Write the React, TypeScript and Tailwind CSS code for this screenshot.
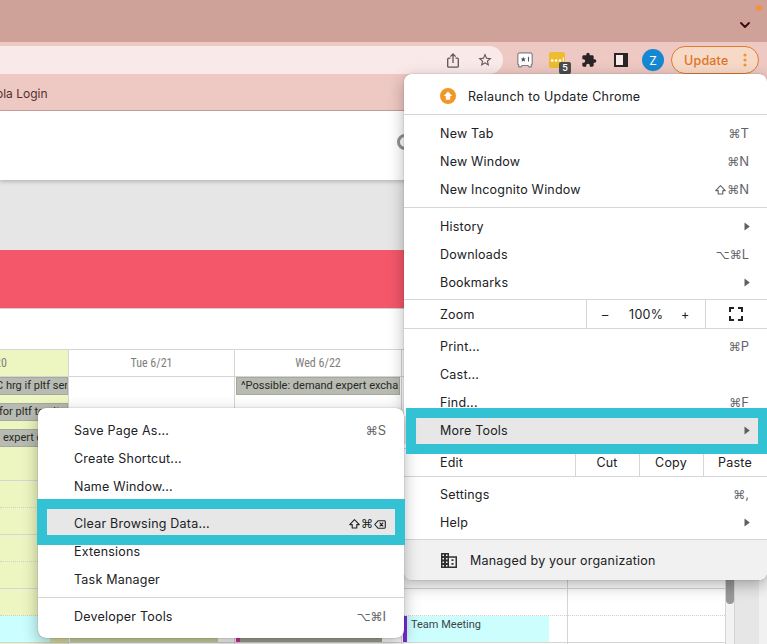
import React from 'react';
import { clsx } from 'clsx';
import { ChevronDown } from 'lucide-react';
import { MdExtension, MdFullscreen, MdOutlineStarBorder } from 'react-icons/md';

const COLORS = {
  today: 'bg-[#edf6c1]',
};

interface MenuRowProps {
  label: string;
  shortcut?: string;
  submenu?: boolean;
  dark?: boolean;
}

const MenuRow: React.FC<MenuRowProps> = ({ label, shortcut, submenu, dark }) => (
  <div className="flex h-7 shrink-0 items-center justify-between pl-9 pr-[18px]">
    <span className="pt-[2px]">{label}</span>
    {shortcut && <Shortcut keys={shortcut} dark={dark} />}
    {submenu && (
      <svg className="-mr-px h-[9px] w-[6px]" viewBox="0 0 6 9" fill="#5f6063">
        <path d="M.5 .5 5.8 4.5 .5 8.5Z" />
      </svg>
    )}
  </div>
);

const Key: React.FC<{ name: string }> = ({ name }) => {
  if (name === '⇧') {
    return (
      <svg className="mr-px h-[10px] w-[11px]" viewBox="0 0 11 10" fill="none" stroke="currentColor" strokeWidth="1.1" strokeLinejoin="round">
        <path d="M5.500 .7 10.300 5.600H7.800V9H3.200V5.600H.7Z" />
      </svg>
    );
  }
  if (name === '⌫') {
    return (
      <svg className="ml-px h-[9px] w-3" viewBox="0 0 12 9" fill="none" stroke="currentColor" strokeWidth="1.1" strokeLinejoin="round">
        <path d="M4 .8H10.400Q11.300 .8 11.300 1.700V7.300Q11.300 8.200 10.400 8.200H4L.7 4.500ZM5.600 2.700 9.200 6.300M9.200 2.700 5.600 6.300" />
      </svg>
    );
  }
  if (/[A-Z,]/.test(name)) {
    return <span className="text-[13px]">{name}</span>;
  }
  return <span className="font-['DejaVu_Sans'] text-[12px]">{name}</span>;
};

const Shortcut: React.FC<{ keys: string; dark?: boolean }> = ({ keys, dark }) => (
  <span className={clsx('flex items-center pt-[2px] tracking-normal', dark ? 'text-[#202124]' : 'text-[#5f6368]')}>
    {Array.from(keys).map((key, i) => (
      <Key key={i} name={key} />
    ))}
  </span>
);

const Separator = () => <div className="h-px shrink-0 bg-[#d6d6d6]" />;

const ShareIcon = () => (
  <svg className="h-[15px] w-3" viewBox="0 0 12 15" fill="none" stroke="#5f5658" strokeWidth="1.3">
    <path d="M3.5 5.2H1.7a1 1 0 0 0-1 1v7a1 1 0 0 0 1 1h8.600a1 1 0 0 0 1-1v-7a1 1 0 0 0-1-1H8.500" />
    <path d="M6 10V1.200M3.400 3.600 6 1l2.600 2.600" />
  </svg>
);

const TicketIcon = () => (
  <svg className="h-4 w-4" viewBox="0 0 16 16">
    <path
      d="M3 .8h10A2 2 0 0 1 15.200 3v9l-.9 1v1.800h-2.300l-1.200-1.300H5.200L4 14.800H1.700V13L.8 12V3A2 2 0 0 1 3 .8Z"
      fill="#fff"
      stroke="#7f8386"
      strokeWidth="1.2"
      strokeLinejoin="round"
    />
    <path
      d="M6.300 4.700 7 6.500 8.900 6.600 7.500 7.800 8 9.700 6.300 8.700 4.600 9.700 5.100 7.800 3.700 6.600 5.600 6.500Z"
      fill="#4c5154"
    />
    <path d="M11.500 4.800v4.800" stroke="#555a5d" strokeWidth="1.100" />
  </svg>
);

const NotesIcon = () => (
  <div className="relative h-4 w-4 rounded-[2px] bg-[#edbd2f]">
    <svg className="h-4 w-4" viewBox="0 0 16 16" fill="#fff">
      <circle cx="3.200" cy="8.500" r="1.300" />
      <circle cx="7.100" cy="8.500" r="1.300" />
      <circle cx="11" cy="8.500" r="1.300" />
      <rect x="13.800" y="5.500" width="1" height="4" />
    </svg>
    <span className="absolute left-[10px] top-[10px] flex h-3 w-3 items-center justify-center rounded-[2px] bg-[#4b4b4b] text-[9px] font-semibold text-white">
      5
    </span>
  </div>
);

const BrowserHeader = () => (
  <header className="shrink-0">
    <div className="relative flex h-[42px] justify-end bg-[#cea199] pr-[14px] pt-[17px]">
      <ChevronDown className="h-4 w-4 text-[#3c0b10]" strokeWidth={2.800} />
      <span className="absolute right-[5px] top-[5px] h-[6px] w-[6px] rounded-full bg-[#f39237]" />
    </div>
    <div className="flex h-8 items-center bg-[#eec8c2] pt-1">
      <div className="flex h-7 w-[503px] items-center justify-end rounded-r-full bg-[#f9e9e8] pr-[10px]">
        <ShareIcon />
        <MdOutlineStarBorder className="ml-[18px] h-4 w-4 text-[#5f5658]" />
      </div>
      <div className="ml-[14px] flex items-center">
        <TicketIcon />
        <div className="ml-4">
          <NotesIcon />
        </div>
        <MdExtension className="ml-4 h-4 w-4 text-[#2a2425]" />
        <div className="ml-[17px] h-[14px] w-[14px] border-2 border-r-[5px] border-[#2a2425] bg-[#faebe9]" />
        <div className="ml-[14px] flex h-[22px] w-[22px] items-center justify-center rounded-full bg-[#1688d2] pt-px text-[12px] text-white">
          Z
        </div>
        <div className="ml-[7px] flex h-7 w-[88px] items-center rounded-full border border-[#e17a2c] bg-[#f7d9c7] pl-3 text-[#e0731f]">
          <span className="pt-[2px] text-[12.5px] font-medium tracking-[0.2px]">Update</span>
          <svg className="ml-[15px] h-4 w-1" viewBox="0 0 4 16" fill="#ef962f">
            <circle cx="2" cy="3" r="1.600" />
            <circle cx="2" cy="8" r="1.600" />
            <circle cx="2" cy="13" r="1.600" />
          </svg>
        </div>
      </div>
    </div>
    <div className="flex h-[37px] items-center border-b border-[#c8a09b] bg-[#eec8c2] pt-[3px] text-[12px] text-[#53302e]">
      <span className="-ml-[4px]">ola Login</span>
    </div>
  </header>
);

const AllDayEvent: React.FC<{ children: React.ReactNode; className?: string }> = ({ children, className }) => (
  <div
    className={clsx(
      'h-[18px] overflow-hidden whitespace-nowrap border border-[#a5a89f] bg-[#b8bbb1] text-[11px] leading-[15px] text-[#282828]',
      className
    )}
  >
    {children}
  </div>
);

interface DayColumnProps {
  title?: React.ReactNode;
  width: string;
  today?: boolean;
  allDay?: React.ReactNode;
  meeting?: React.ReactNode;
}

const DayColumn: React.FC<DayColumnProps> = ({ title, width, today, allDay, meeting }) => (
  <div className={clsx('flex shrink-0 flex-col overflow-hidden border-r border-[#d5d5d5]', width, today ? COLORS.today : 'bg-white')}>
    <div
      className={clsx(
        'flex h-7 shrink-0 items-center border-y border-[#d5d5d5] text-[12px] text-[#7e7e7e]',
        today ? 'justify-start' : 'justify-center'
      )}
    >
      <span className={clsx('whitespace-nowrap [font-stretch:75%]', today && '-ml-[5px]')}>{title}</span>
    </div>
    <div className="flex h-[104px] shrink-0 flex-col gap-2 border-b border-[#d5d5d5]">{allDay}</div>
    {[0, 1, 2].map((hour) => (
      <React.Fragment key={hour}>
        <div className="h-[27px] shrink-0 border-b border-dotted border-[#cfcfcf]" />
        <div className="h-[27px] shrink-0 border-b border-[#d5d5d5]">{hour === 2 && meeting}</div>
      </React.Fragment>
    ))}
  </div>
);

const Calendar = () => (
  <div className="flex h-[295px] overflow-hidden font-[Roboto,sans-serif]">
    <DayColumn
      title="20"
      width="w-[69px]"
      today
      allDay={
        <>
          <AllDayEvent className="border-l-0"><span className="-ml-[4px]">C hrg if pltf ser</span></AllDayEvent>
          <AllDayEvent className="border-l-0"><span className="-ml-px">for pltf to plt</span></AllDayEvent>
          <AllDayEvent className="border-l-0"><span className="ml-[3px]">expert d</span></AllDayEvent>
        </>
      }
      meeting={
        <div className="flex h-[26px]">
          <div className="w-[50px] bg-[#cbfefe]" />
          <div className="flex-1 bg-[#dfe0a4]" />
        </div>
      }
    />
    <DayColumn title="Tue 6/21" width="w-[166px]" meeting={<div className="ml-px h-[26px] w-[148px] bg-[#cdd69c]" />} />
    <DayColumn
      title="Wed 6/22"
      width="w-[167px]"
      allDay={
        <AllDayEvent className="ml-px mr-px pl-1">
          <span>^Possible: demand expert excha</span>
        </AllDayEvent>
      }
      meeting={<div className="ml-px h-[26px] w-[146px] border-l-4 border-[#d42a97] bg-[#a3a395]" />}
    />
    <DayColumn
      width="w-[166px]"
      meeting={
        <div className="ml-px h-[26px] w-[146px] border-l-4 border-[#7a2bd6] bg-[#cdfefe] pl-1 pt-[2px] text-[11px] leading-[13px] text-[#3c4545]">
          Team Meeting
        </div>
      }
    />
    <DayColumn width="w-[158px]" />
    <div className="w-2 shrink-0 bg-[#f2f2f2]">
      <div className="h-[255px] w-2 rounded-full bg-[#999]" />
    </div>
    <div className="w-[25px] shrink-0 border-l border-[#d5d5d5] bg-[#e6e6e6]" />
    <div className="flex-1 bg-[#f1f1f1]" />
  </div>
);

const MainMenu = () => (
  <div className="absolute left-[404px] top-[74px] flex h-[506px] w-[363px] flex-col overflow-hidden rounded-[8px] bg-white text-[12.5px] tracking-[0.21px] text-[#202124]">
    <div className="flex h-10 shrink-0 items-center pl-9 pt-1">
      <svg className="mr-3 h-4 w-4" viewBox="0 0 16 16">
        <circle cx="8" cy="8" r="8" fill="#f29627" />
        <path d="M8 3.600 12.200 8.100H10.200V11.800H5.800V8.100H3.800Z" fill="#fff" />
      </svg>
      <span className="pt-[2px] tracking-[0.25px]">Relaunch to Update Chrome</span>
    </div>
    <Separator />
    <div className="py-1">
      <MenuRow label="New Tab" shortcut="⌘T" />
      <MenuRow label="New Window" shortcut="⌘N" />
      <MenuRow label="New Incognito Window" shortcut="⇧⌘N" />
    </div>
    <Separator />
    <div className="pb-[3px] pt-1">
      <MenuRow label="History" submenu />
      <MenuRow label="Downloads" shortcut="⌥⌘L" />
      <MenuRow label="Bookmarks" submenu />
    </div>
    <Separator />
    <div className="flex h-7 shrink-0 items-center pl-9">
      <span className="w-[146px] pt-[2px]">Zoom</span>
      <div className="flex h-full w-[119px] items-center border-l border-[#d6d6d6] pl-[15px] pt-[2px]">
        <span className="w-[27px]">–</span>
        <span className="w-[52px] tracking-[0.3px]">100%</span>
        <span>+</span>
      </div>
      <div className="flex h-full flex-1 items-center justify-center border-l border-[#d6d6d6] pr-px">
        <MdFullscreen className="h-6 w-6" />
      </div>
    </div>
    <Separator />
    <div className="pb-1 pt-[3px]">
      <MenuRow label="Print..." shortcut="⌘P" />
      <MenuRow label="Cast..." />
      <MenuRow label="Find..." shortcut="⌘F" />
      <div className="bg-[#e7e7e7]">
        <MenuRow label="More Tools" submenu />
      </div>
    </div>
    <Separator />
    <div className="flex h-[27px] shrink-0 items-center pl-9">
      <span className="w-[135px] pt-px">Edit</span>
      <div className="flex h-full w-16 items-center justify-center border-l border-[#d6d6d6] pr-px pt-px">Cut</div>
      <div className="flex h-full w-16 items-center justify-center border-l border-[#d6d6d6] pr-px pt-px">Copy</div>
      <div className="flex h-full w-16 items-center justify-center border-l border-[#d6d6d6] pr-px pt-px">Paste</div>
    </div>
    <Separator />
    <div className="py-[3px]">
      <MenuRow label="Settings" shortcut="⌘," />
      <MenuRow label="Help" submenu />
    </div>
    <Separator />
    <div className="flex flex-1 items-center bg-[#f1f1f1] pl-[37px]">
      <svg className="mr-[13px] h-[15px] w-4" viewBox="0 0 16 15" fill="#303134">
        <path
          fillRule="evenodd"
          d="M0 0H8V3.300H16V15H0ZM1.500 1.500V3H3V1.500ZM5 1.500V3H6.500V1.500ZM1.500 5V6.500H3V5ZM5 5V6.500H6.500V5ZM1.500 8.500V10H3V8.500ZM5 8.500V10H6.500V8.500ZM1.500 12V13.500H3V12ZM5 12V13.500H6.500V12ZM8 4.800V13.500H14.500V4.800ZM10.500 6.300H12.500V8H10.500ZM10.500 10H12.500V11.700H10.500Z"
        />
      </svg>
      <span className="pt-[2px]">Managed by your organization</span>
    </div>
  </div>
);

const MoreToolsMenu = () => (
  <div className="absolute left-[38px] top-[408px] flex h-[230px] w-[366px] flex-col rounded-[8px] bg-white pt-2 text-[12.5px] tracking-[0.21px] text-[#202124] shadow-[0_0_1px_rgba(0,0,0,0.55),0_5px_16px_rgba(0,0,0,0.3)]">
    <MenuRow label="Save Page As..." shortcut="⌘S" />
    <MenuRow label="Create Shortcut..." />
    <MenuRow label="Name Window..." />
    <div className="py-1">
      <Separator />
    </div>
    <div className="bg-[#e7e7e7]">
      <MenuRow label="Clear Browsing Data..." shortcut="⇧⌘⌫" dark />
    </div>
    <MenuRow label="Extensions" />
    <MenuRow label="Task Manager" />
    <div className="py-1">
      <Separator />
    </div>
    <MenuRow label="Developer Tools" shortcut="⌥⌘I" />
  </div>
);

const App = () => {
  return (
    <div className="relative flex h-[644px] w-[767px] flex-col overflow-hidden bg-white font-[Inter,sans-serif]">
      <BrowserHeader />
      <div className="flex h-[139px] shrink-0 flex-col bg-[#e6e6e6]">
        <div className="flex h-[69px] items-center bg-white pl-[397px] shadow-[0_2px_4px_rgba(0,0,0,0.2)]">
          <div className="mb-[7px] h-4 w-4 rounded-full border-[3px] border-[#929292]" />
        </div>
      </div>
      <div className="h-[59px] shrink-0 border-b border-[#d0d0d0] bg-[#f4576a]" />
      <div className="h-10 shrink-0 bg-white" />
      <Calendar />

      {/* The main menu's shadow sits under both menus */}
      <div className="absolute left-[404px] top-[74px] h-[506px] w-[363px] rounded-[8px] shadow-[0_0_1px_rgba(0,0,0,0.55),0_5px_16px_rgba(0,0,0,0.3)]" />
      <MainMenu />
      <MoreToolsMenu />

      {/* Callout frames */}
      <div className="absolute left-[406px] top-[408px] h-[46px] w-[361px] border-[10px] border-r-[9px] border-[#33c1d4]" />
      <div className="absolute left-[37px] top-[499px] h-[46px] w-[368px] border-[10px] border-[#33c1d4]" />
    </div>
  );
};

export default App;
